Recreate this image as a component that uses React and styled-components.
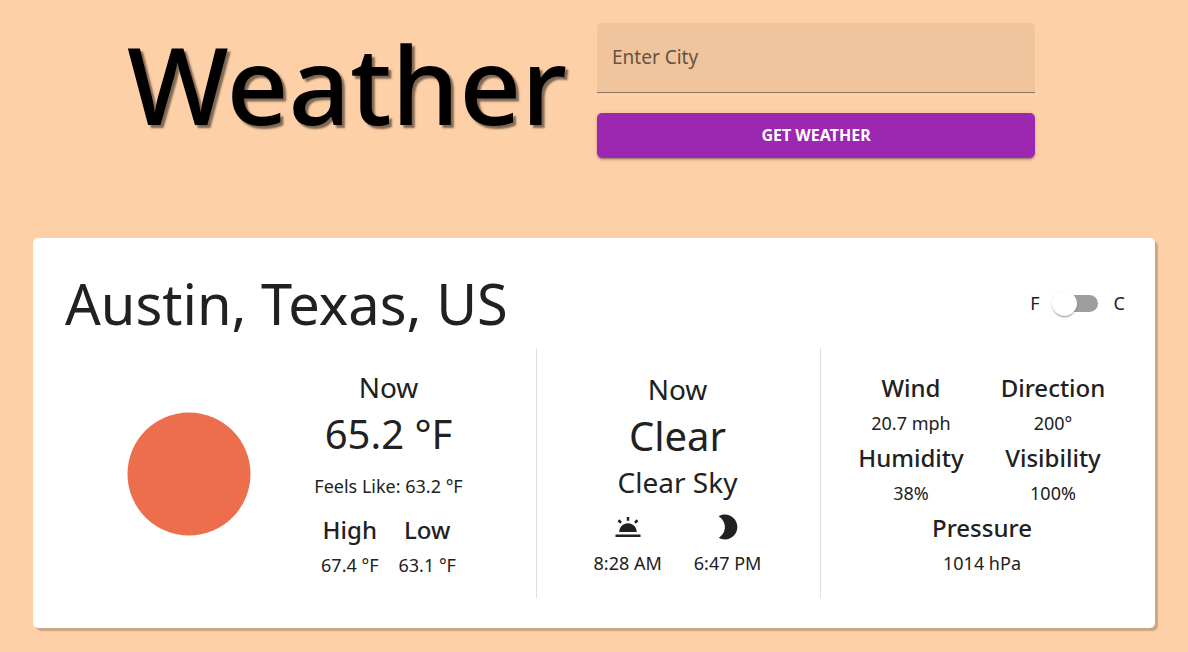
import React, { useState } from 'react';
import styled, { createGlobalStyle } from 'styled-components';

const GlobalStyle = createGlobalStyle`
  *, *::before, *::after { box-sizing: border-box; }
  body {
    margin: 0;
    background: #fed0a7;
    color: #212121;
    font-family: "Noto Sans", "Open Sans", sans-serif;
    font-size: 18px;
  }
  h1, h2, h3, p, dl, dt, dd { margin: 0; font-weight: 400; }
`;

const Page = styled.main`
  padding: 23px 33px 24px;
`;

const Header = styled.header`
  display: grid;
  grid-template-columns: minmax(0, 1fr) minmax(0, 1fr);
  column-gap: 6px;
  max-width: 882px;
  margin: 0 auto 80px;
`;

const Title = styled.h1`
  && { font-weight: 500; }
  justify-self: end;
  padding-right: 24px;
  color: #000;
  font-size: 108px;
  line-height: 122px;
  white-space: nowrap;
  text-shadow: 3px 3px 2px rgba(0, 0, 0, 0.5);
`;

const SearchForm = styled.form`
  display: flex;
  flex-direction: column;
  gap: 20px;
`;

const CityInput = styled.input`
  width: 100%;
  height: 70px;
  padding: 0 15px 2px;
  border: 0;
  border-bottom: 1px solid #8c735d;
  border-radius: 5px 5px 0 0;
  background: #f0c49d;
  color: #212121;
  font: inherit;
  font-size: 19px;
  outline: none;

  &::placeholder { color: #65533f; opacity: 1; }
`;

const SubmitButton = styled.button`
  height: 45px;
  padding: 0 8px 2px;
  border: 0;
  border-radius: 5px;
  background: #9c27b0;
  color: #fff;
  font: inherit;
  font-size: 16px;
  font-weight: 700;
  text-transform: uppercase;
  cursor: pointer;
  box-shadow: 0 3px 1px -2px rgba(0, 0, 0, 0.2), 0 2px 2px rgba(0, 0, 0, 0.14),
    0 1px 5px rgba(0, 0, 0, 0.12);
`;

const Card = styled.section`
  padding: 30px 10px;
  border-radius: 5px;
  background: #fff;
  box-shadow: 3px 3px 1px rgba(0, 0, 0, 0.2);
`;

const CardHeader = styled.div`
  display: flex;
  align-items: center;
  justify-content: space-between;
  padding: 0 20px 0 22px;
  margin-bottom: 10px;
`;

const City = styled.h2`
  font-size: 56px;
  line-height: 70px;
`;

const UnitLabel = styled.label`
  display: flex;
  align-items: center;
  gap: 16px;
`;

const Switch = styled.input`
  appearance: none;
  position: relative;
  width: 42px;
  height: 17px;
  margin: 0;
  border-radius: 9px;
  background: #9e9e9e;
  cursor: pointer;

  &::before {
    content: "";
    position: absolute;
    top: -4px;
    left: ${(p) => (p.checked ? '21px' : '-4px')};
    width: 25px;
    height: 25px;
    border-radius: 50%;
    background: #fff;
    box-shadow: 0 2px 1px -1px rgba(0, 0, 0, 0.2), 0 1px 1px rgba(0, 0, 0, 0.14),
      0 1px 3px rgba(0, 0, 0, 0.12);
  }
`;

const Columns = styled.div`
  display: grid;
  grid-template-columns: 494fr 284fr 324fr;
  min-height: 250px;
`;

const Column = styled.div`
  display: flex;
  align-items: center;
  justify-content: center;
  padding: 2px 2px 0 0;
  border-right: ${(p) => (p.$last ? '0' : '1px solid #e0e0e0')};
`;

const SunFrame = styled.div`
  display: flex;
  justify-content: center;
  width: 200px;
`;

const Summary = styled.div`
  display: flex;
  flex-direction: column;
  align-items: center;
  width: 200px;
`;

const Caption = styled.h3`
  font-size: 28px;
  line-height: ${(p) => (p.as === 'p' ? '40px' : '42px')};
`;

const Reading = styled.p`
  font-size: 40px;
  line-height: 52px;
`;

const FeelsLike = styled.p`
  padding: 12px 0;
  line-height: 28px;
`;

const Pair = styled.dl`
  display: flex;
  justify-content: center;
  gap: ${(p) => p.$gap}px;
`;

const Stats = styled.dl`
  display: flex;
  flex-wrap: wrap;
  justify-content: center;
  width: 284px;
  padding-top: 2px;
`;

const Stat = styled.div`
  flex: none;
  width: ${(p) => (p.$wide ? '142px' : 'auto')};
  text-align: center;
`;

const StatName = styled.dt`
  && { font-weight: 500; }
  font-size: 24px;
  line-height: 36px;
`;

const StatValue = styled.dd`
  line-height: 34px;
`;

const IconTerm = styled.dt`
  display: flex;
  justify-content: center;
  padding: 10px 0 4px;
`;

const SunDisc = () => (
  <svg width="124" height="124" viewBox="0 0 124 124" role="img" aria-label="Clear sky">
    <circle cx="62" cy="62" r="61.5" fill="#ec6e4c" />
  </svg>
);

const SunriseIcon = () => (
  <svg width="30" height="30" viewBox="0 0 24 24" fill="currentColor" role="img" aria-label="Sunrise">
    <path d="M2 18h20v2H2zM11 4h2v3h-2zM5 16c0-3.87 3.13-7 7-7s7 3.13 7 7z" />
    <path d="M4.4 6.6l2 2M19.6 6.6l-2 2" stroke="currentColor" strokeWidth="2" />
  </svg>
);

const MoonIcon = () => (
  <svg width="30" height="30" viewBox="0 0 24 24" fill="currentColor" role="img" aria-label="Sunset">
    <path d="M9.5 2c-1.82 0-3.53.5-5 1.35 2.99 1.73 5 4.95 5 8.65s-2.01 6.92-5 8.65c1.47.85 3.18 1.35 5 1.35 5.52 0 10-4.48 10-10s-4.48-10-10-10z" />
  </svg>
);

const conditions = [
  ['Wind', '20.7 mph'],
  ['Direction', '200°'],
  ['Humidity', '38%'],
  ['Visibility', '100%'],
  ['Pressure', '1014 hPa'],
];

const formatTemp = (f, celsius) =>
  celsius ? `${(((f - 32) * 5) / 9).toFixed(1)} °C` : `${f.toFixed(1)} °F`;

export default function App() {
  const [celsius, setCelsius] = useState(false);
  const [city, setCity] = useState('');

  return (
    <>
      <GlobalStyle />
      <Page>
        <Header>
          <Title>Weather</Title>
          <SearchForm onSubmit={(e) => e.preventDefault()}>
            <CityInput
              aria-label="Enter City"
              placeholder="Enter City"
              value={city}
              onChange={(e) => setCity(e.target.value)}
            />
            <SubmitButton type="submit">Get Weather</SubmitButton>
          </SearchForm>
        </Header>
        <Card>
          <CardHeader>
            <City>Austin, Texas, US</City>
            <UnitLabel>
              <span>F</span>
              <Switch
                type="checkbox"
                role="switch"
                checked={celsius}
                onChange={(e) => setCelsius(e.target.checked)}
              />
              <span>C</span>
            </UnitLabel>
          </CardHeader>
          <Columns>
            <Column>
              <SunFrame>
                <SunDisc />
              </SunFrame>
              <Summary>
                <Caption>Now</Caption>
                <Reading>{formatTemp(65.2, celsius)}</Reading>
                <FeelsLike>Feels Like: {formatTemp(63.2, celsius)}</FeelsLike>
                <Pair $gap={20}>
                  <Stat>
                    <StatName>High</StatName>
                    <StatValue>{formatTemp(67.4, celsius)}</StatValue>
                  </Stat>
                  <Stat>
                    <StatName>Low</StatName>
                    <StatValue>{formatTemp(63.1, celsius)}</StatValue>
                  </Stat>
                </Pair>
              </Summary>
            </Column>
            <Column>
              <Summary>
                <Caption>Now</Caption>
                <Reading>Clear</Reading>
                <Caption as="p">Clear Sky</Caption>
                <Pair $gap={32}>
                  <Stat>
                    <IconTerm><SunriseIcon /></IconTerm>
                    <StatValue>8:28 AM</StatValue>
                  </Stat>
                  <Stat>
                    <IconTerm><MoonIcon /></IconTerm>
                    <StatValue>6:47 PM</StatValue>
                  </Stat>
                </Pair>
              </Summary>
            </Column>
            <Column $last>
              <Stats>
                {conditions.map(([name, value]) => (
                  <Stat key={name} $wide>
                    <StatName>{name}</StatName>
                    <StatValue>{value}</StatValue>
                  </Stat>
                ))}
              </Stats>
            </Column>
          </Columns>
        </Card>
      </Page>
    </>
  );
}
